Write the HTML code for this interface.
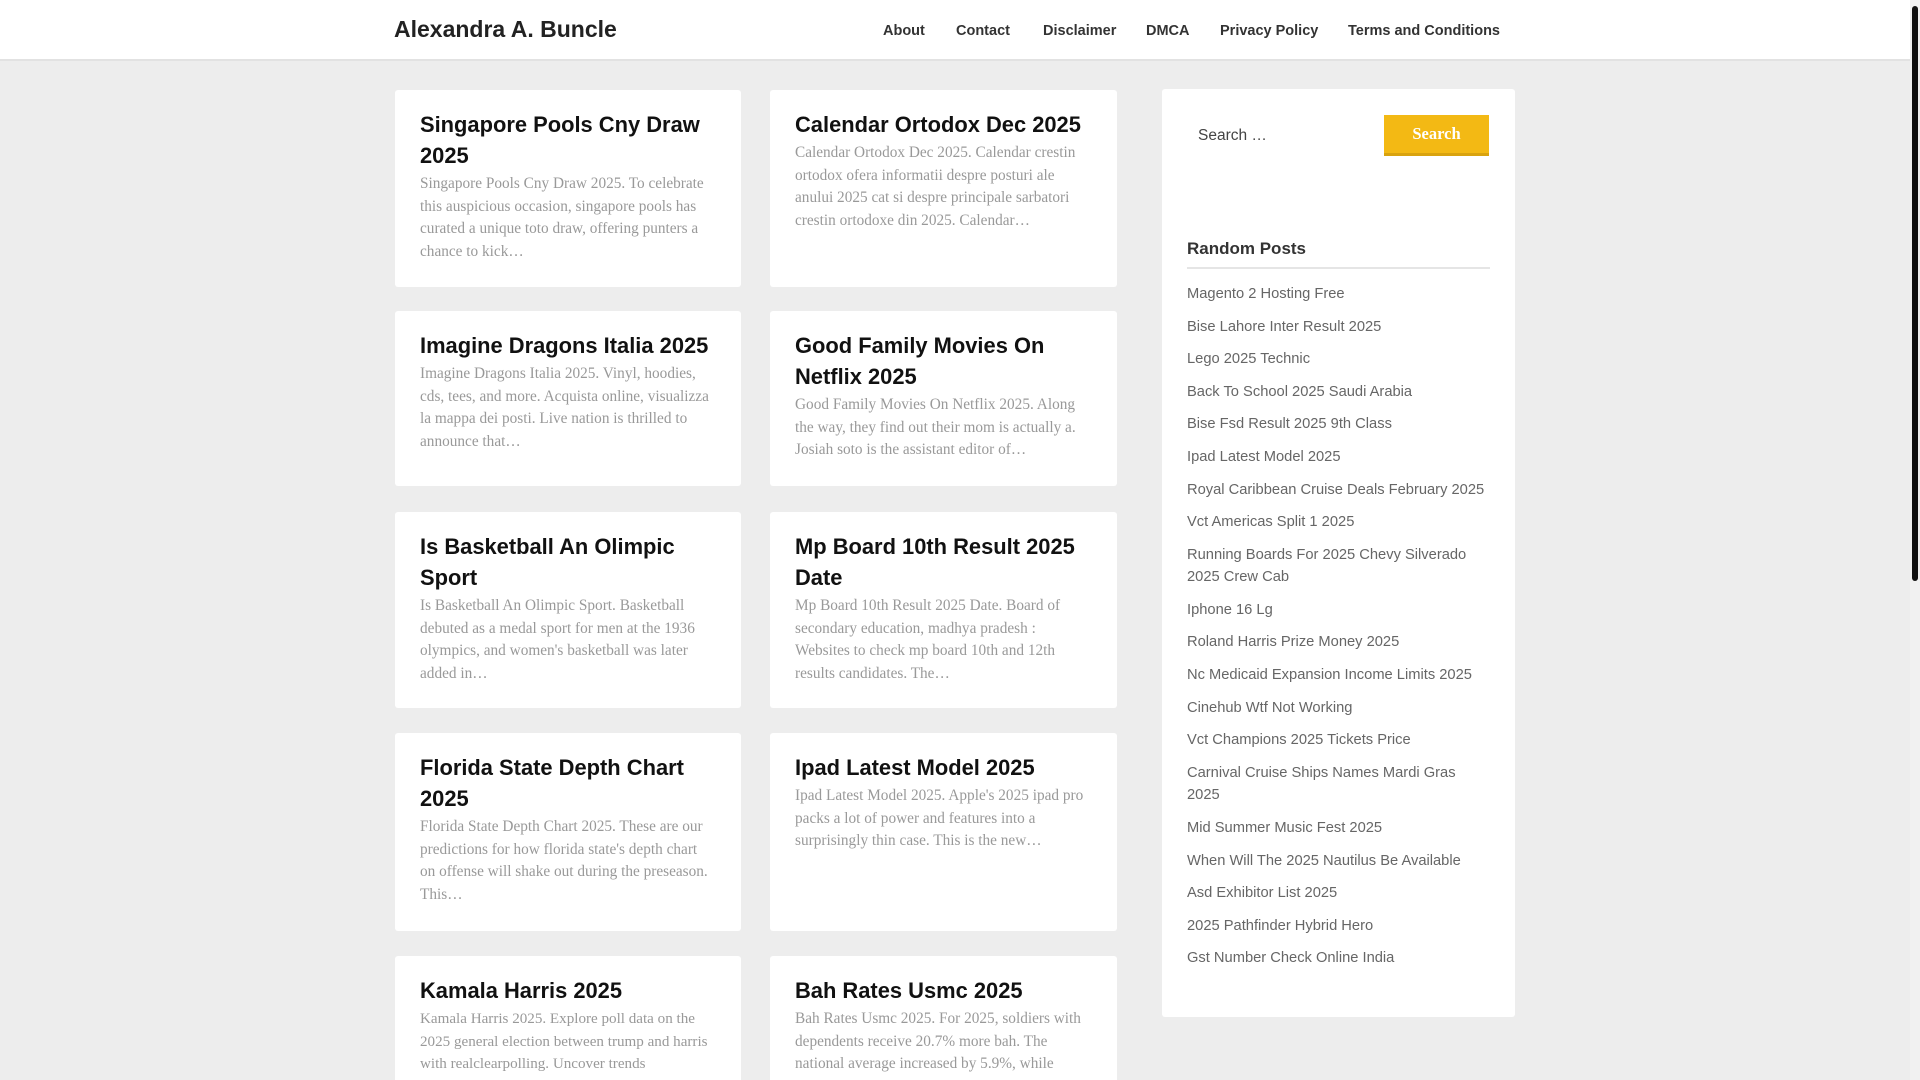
<!DOCTYPE html>
<html><head><meta charset="utf-8"><style>
*{margin:0;padding:0;box-sizing:border-box}
html,body{width:1920px;height:1080px;overflow:hidden}
body{background:#ededed;font-family:"Liberation Sans",Arial,sans-serif;position:relative}
.wrap{position:absolute;left:0;top:0;width:1920px;height:1080px;overflow:hidden}
.hdr{position:absolute;left:0;top:0;width:1910px;height:61px;background:#fff;border-bottom:2px solid #e2e2e2}
.logo{position:absolute;left:394px;top:16px;font-size:23px;font-weight:bold;color:#222}
.nav a{position:absolute;top:23px;font-size:14.5px;font-weight:bold;color:#333;text-decoration:none}
.sb{position:absolute;right:0;top:0;width:10px;height:1080px;background:#f1f1f1}
.sb i{position:absolute;left:2px;top:6px;width:6px;height:575px;background:#111;border-radius:3px}
.card{position:absolute;background:#fff;border-radius:3px;padding:19px 25px 0 25px;overflow:hidden}
.card h2{font-size:21.9px;line-height:31px;color:#111;font-weight:bold}
.card p{font-family:"Liberation Serif",serif;font-size:15.3px;line-height:22.5px;color:#999;margin-top:2px}
.side{position:absolute;left:1162px;top:89px;width:353px;height:928px;background:#fff;border-radius:3px}
.srch{position:absolute;left:36px;top:38px;font-size:15.5px;color:#444}
.btn{position:absolute;left:222px;top:26px;width:105px;height:41px;background:#f3b914;border-bottom:3px solid #d9a30e;color:#fff;font-family:"Liberation Serif",serif;font-size:16.5px;font-weight:bold;text-align:center;line-height:38px}
.rp{position:absolute;left:25px;top:150px;width:303px;font-size:17px;font-weight:bold;color:#333;padding-bottom:8px;border-bottom:2px solid #e5e5e5}
.list{position:absolute;left:25px;top:194px;width:300px;font-size:14.7px;color:#666}
.list div{line-height:22.5px;margin-bottom:10.1px}
</style></head><body><div class="wrap">
<div class="hdr"><div class="logo">Alexandra A. Buncle</div>
<div class="nav"><a style="left:883px">About</a><a style="left:956px">Contact</a><a style="left:1043px">Disclaimer</a><a style="left:1146px">DMCA</a><a style="left:1220px">Privacy Policy</a><a style="left:1348px">Terms and Conditions</a></div></div>
<div class="sb"><i></i></div>

<div class="card" style="left:395px;top:90px;width:346px;height:197px"><h2>Singapore Pools Cny Draw 2025</h2><p>Singapore Pools Cny Draw 2025. To celebrate this auspicious occasion, singapore pools has curated a unique toto draw, offering punters a chance to kick…</p></div>
<div class="card" style="left:770px;top:90px;width:347px;height:197px"><h2>Calendar Ortodox Dec 2025</h2><p>Calendar Ortodox Dec 2025. Calendar crestin ortodox ofera informatii despre posturi ale anului 2025 cat si despre principale sarbatori crestin ortodoxe din 2025. Calendar…</p></div>

<div class="card" style="left:395px;top:311px;width:346px;height:175px"><h2>Imagine Dragons Italia 2025</h2><p>Imagine Dragons Italia 2025. Vinyl, hoodies, cds, tees, and more. Acquista online, visualizza la mappa dei posti. Live nation is thrilled to announce that…</p></div>
<div class="card" style="left:770px;top:311px;width:347px;height:175px"><h2>Good Family Movies On Netflix 2025</h2><p>Good Family Movies On Netflix 2025. Along the way, they find out their mom is actually a. Josiah soto is the assistant editor of…</p></div>

<div class="card" style="left:395px;top:512px;width:346px;height:196px"><h2>Is Basketball An Olimpic Sport</h2><p>Is Basketball An Olimpic Sport. Basketball debuted as a medal sport for men at the 1936 olympics, and women's basketball was later added in…</p></div>
<div class="card" style="left:770px;top:512px;width:347px;height:196px"><h2>Mp Board 10th Result 2025 Date</h2><p>Mp Board 10th Result 2025 Date. Board of secondary education, madhya pradesh : Websites to check mp board 10th and 12th results candidates. The…</p></div>

<div class="card" style="left:395px;top:733px;width:346px;height:198px"><h2>Florida State Depth Chart 2025</h2><p>Florida State Depth Chart 2025. These are our predictions for how florida state's depth chart on offense will shake out during the preseason. This…</p></div>
<div class="card" style="left:770px;top:733px;width:347px;height:198px"><h2>Ipad Latest Model 2025</h2><p>Ipad Latest Model 2025. Apple's 2025 ipad pro packs a lot of power and features into a surprisingly thin case. This is the new…</p></div>

<div class="card" style="left:395px;top:956px;width:346px;height:200px"><h2>Kamala Harris 2025</h2><p style="font-size:15.1px">Kamala Harris 2025. Explore poll data on the 2025 general election between trump and harris with realclearpolling. Uncover trends</p></div>
<div class="card" style="left:770px;top:956px;width:347px;height:200px"><h2>Bah Rates Usmc 2025</h2><p>Bah Rates Usmc 2025. For 2025, soldiers with dependents receive 20.7% more bah. The national average increased by 5.9%, while</p></div>

<div class="side">
<div class="srch">Search …</div><div class="btn">Search</div>
<div class="rp">Random Posts</div>
<div class="list">
<div>Magento 2 Hosting Free</div><div>Bise Lahore Inter Result 2025</div><div>Lego 2025 Technic</div><div>Back To School 2025 Saudi Arabia</div><div>Bise Fsd Result 2025 9th Class</div><div>Ipad Latest Model 2025</div><div>Royal Caribbean Cruise Deals February 2025</div><div>Vct Americas Split 1 2025</div><div>Running Boards For 2025 Chevy Silverado 2025 Crew Cab</div><div>Iphone 16 Lg</div><div>Roland Harris Prize Money 2025</div><div>Nc Medicaid Expansion Income Limits 2025</div><div>Cinehub Wtf Not Working</div><div>Vct Champions 2025 Tickets Price</div><div>Carnival Cruise Ships Names Mardi Gras 2025</div><div>Mid Summer Music Fest 2025</div><div>When Will The 2025 Nautilus Be Available</div><div>Asd Exhibitor List 2025</div><div>2025 Pathfinder Hybrid Hero</div><div>Gst Number Check Online India</div>
</div></div>
</div></body></html>
